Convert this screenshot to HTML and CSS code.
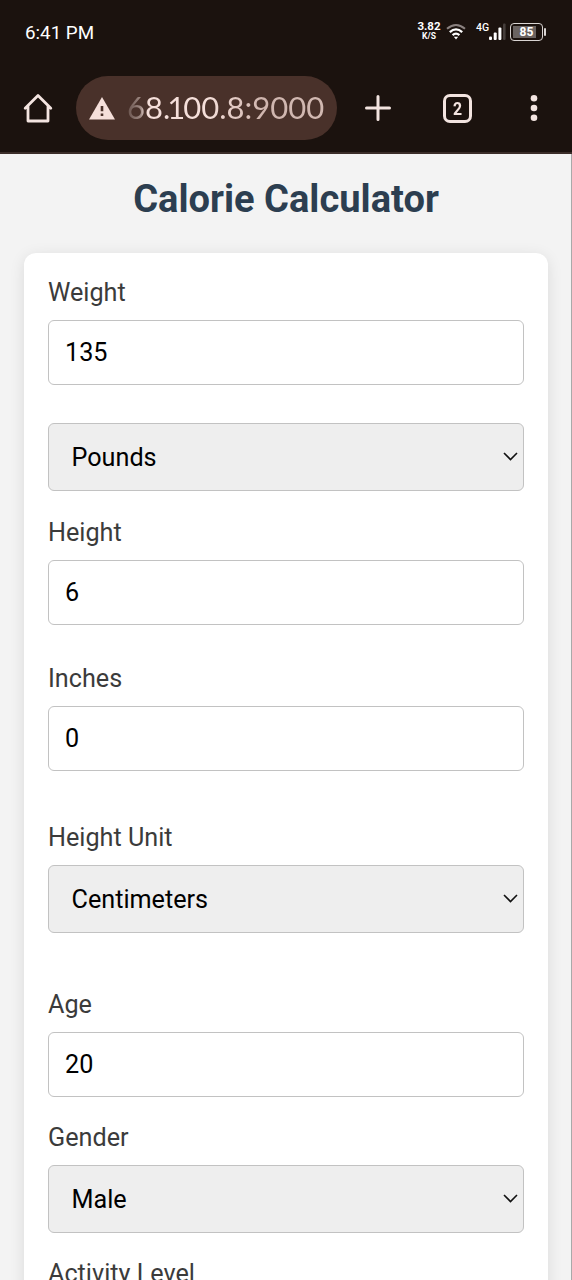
FILE: index.html
```html
<!DOCTYPE html>
<html lang="en">
<head>
<meta charset="utf-8">
<title>Calorie Calculator</title>
<link rel="stylesheet" href="styles.css">
</head>
<body>
<header class="chrome">
  <div class="status">
    <span class="clock">6:41 PM</span>
    <div class="indicators">
      <div class="speed"><span>3.82</span><span class="unit">K/S</span></div>
      <svg class="wifi" width="20" height="17" viewBox="0 0 20 17" fill="none" stroke="#fff" stroke-width="2">
        <path d="M1 5.8Q10-1.8 19 5.8" stroke="#8b8280"/>
        <path d="M3.8 9.2Q10 3.6 16.2 9.2" stroke-width="2.3"/>
        <path d="M6.6 12.2Q10 9 13.4 12.2" stroke-width="2.3"/>
        <path d="M7.8 13.8h4.4L10 16.6z" fill="#fff" stroke="none"/>
      </svg>
      <span class="network">4G</span>
      <svg class="signal" width="17" height="18" viewBox="0 0 17 18">
        <rect x="0" y="13.5" width="3" height="3.5" rx="1" fill="#fff"/>
        <rect x="4.7" y="9.5" width="3" height="7.5" rx="1" fill="#fff"/>
        <rect x="9.4" y="4.5" width="3" height="12.5" rx="1" fill="#fff"/>
        <rect x="14" y="0.5" width="2.6" height="16.5" rx="1" fill="#463e3b"/>
      </svg>
      <div class="battery"><span class="charge">85</span></div>
      <i class="battery-tip"></i>
    </div>
  </div>
  <div class="toolbar">
    <svg class="home" width="30" height="30" viewBox="0 0 30 30" fill="none" stroke="#f3e4e0" stroke-width="2.8" stroke-linejoin="round" stroke-linecap="round">
      <path d="M2.2 15.3 15 2.6l12.8 12.7M5 13V28h20V13"/>
    </svg>
    <div class="address">
      <svg width="26" height="23" viewBox="0 0 26 23">
        <path d="M13 0 26 22.5H0z" fill="#f5dfda"/>
        <path d="M11.7 9h2.6v5.2h-2.6zM11.7 16.4h2.6v2.5h-2.6z" fill="#49312a"/>
      </svg>
      <span class="url">68<span class="dot">.</span><span class="one">1</span>00.8:9000</span>
    </div>
    <svg class="plus" width="26" height="26" viewBox="0 0 26 26" stroke="#f3e4e0" stroke-width="3" stroke-linecap="round"><path d="M13 1.5v23M1.5 13h23"/></svg>
    <div class="tabs"><span class="count">2</span></div>
    <svg class="more" width="8" height="28" viewBox="0 0 8 28" fill="#f3e4e0"><circle cx="4" cy="4.3" r="3.3"/><circle cx="4" cy="14" r="3.3"/><circle cx="4" cy="23.7" r="3.3"/></svg>
  </div>
</header>
<main class="page">
  <h1 class="title">Calorie Calculator</h1>
  <form class="card">
    <label class="label weight" for="weight">Weight</label>
    <input class="field" id="weight" value="135">
    <div class="select after-input">Pounds<svg class="chevron" viewBox="0 0 15 9"><path d="M1 1l6.5 6.5L14 1"/></svg></div>
    <label class="label height" for="height">Height</label>
    <input class="field" id="height" value="6">
    <label class="label inches" for="inches">Inches</label>
    <input class="field" id="inches" value="0">
    <span class="label height-unit">Height Unit</span>
    <div class="select">Centimeters<svg class="chevron" viewBox="0 0 15 9"><path d="M1 1l6.5 6.5L14 1"/></svg></div>
    <label class="label age" for="age">Age</label>
    <input class="field" id="age" value="20">
    <span class="label">Gender</span>
    <div class="select">Male<svg class="chevron" viewBox="0 0 15 9"><path d="M1 1l6.5 6.5L14 1"/></svg></div>
    <span class="label">Activity Level</span>
  </form>
</main>
</body>
</html>
```

FILE: styles.css
```css
* { box-sizing: border-box; }

body {
  margin: 0;
  height: 1280px;
  overflow: hidden;
  display: flex;
  flex-direction: column;
  font-family: Roboto, sans-serif;
  background: #f3f3f3;
}

svg { display: block; flex: none; }

.chrome {
  flex: none;
  height: 154px;
  background: #1b120e;
  border-bottom: 2px solid #3b2d29;
  color: #fff;
}

.status {
  height: 64px;
  display: flex;
  align-items: center;
  justify-content: space-between;
  padding: 0 26px 0 25px;
}

.clock { font-size: 18.8px; line-height: 24px; padding-top: 1px; }

.indicators { display: flex; align-items: center; height: 24px; }

.speed {
  display: flex;
  flex-direction: column;
  align-items: center;
  width: 22px;
  font-size: 11.5px;
  line-height: 11px;
  font-weight: 700;
  padding-bottom: 2px;
}

.unit { font-size: 8.5px; line-height: 9px; }
.wifi { margin: 0 0 2px 6px; }

.network {
  margin-left: 10px;
  width: 13px;
  font-size: 10.5px;
  line-height: 12px;
  font-weight: 500;
  padding-bottom: 8px;
}

.battery {
  width: 33px;
  height: 18px;
  margin-left: 4px;
  border: 1.5px solid #d9d4d2;
  border-radius: 4px;
  padding: 2px;
  display: flex;
}

.charge {
  width: 100%;
  background: linear-gradient(90deg, #6a6361 86%, transparent 86%);
  font-size: 12px;
  line-height: 13px;
  font-weight: 700;
  text-align: center;
}

.battery-tip { width: 2px; height: 8px; margin-left: 1px; background: #d9d4d2; border-radius: 1px; }

.toolbar { display: flex; align-items: center; height: 88px; padding-left: 23px; }

.address {
  width: 261px;
  height: 64px;
  margin-left: 23px;
  border-radius: 32px;
  background: #49312a;
  display: flex;
  align-items: center;
  gap: 12px;
  padding-left: 13px;
}

.url {
  font-family: Lato, sans-serif;
  font-size: 31px;
  line-height: 40px;
  padding-bottom: 2px;
  white-space: nowrap;
  color: transparent;
  background: linear-gradient(90deg, #67514b 0, #a08b85 14px, #f5dfda 18px, #f5dfda 80px, #cfb5ae 135px, #d2b9b2 100%);
  background-clip: text;
}

.dot { letter-spacing: -3px; }
.one { letter-spacing: -2px; }

.plus { margin-left: 28px; }

.tabs {
  width: 29px;
  height: 29px;
  margin-left: 52px;
  border: 3px solid #f3e4e0;
  border-radius: 7px;
  color: #f3e4e0;
  font-size: 18px;
  line-height: 23px;
  font-weight: 700;
  text-align: center;
}

.count { display: block; transform: scaleX(0.88); }

.more { margin-left: 58px; }

.page { flex: 1; min-height: 0; overflow: hidden; border-right: 1px solid #a9a9a9; padding: 0 23px 0 24px; }

.title {
  margin: 0;
  height: 99px;
  padding-top: 21px;
  font-size: 38.1px;
  line-height: 48px;
  font-weight: 700;
  text-align: center;
  color: #2c3e50;
}

.card {
  display: flex;
  flex-direction: column;
  height: 1100px;
  padding: 0 24px;
  background: #fff;
  border-radius: 12px;
  box-shadow: 0 3px 15px rgba(0, 0, 0, 0.1);
}

.label {
  flex: none;
  margin: 25px 0 11px;
  font-size: 25.2px;
  line-height: 32px;
  color: #3b3b3b;
}

.field, .select {
  flex: none;
  width: 100%;
  border: 1px solid #c2c2c2;
  border-radius: 6px;
  font: 25.2px/30px Roboto, sans-serif;
  color: #000;
}

.field { height: 65px; padding: 0 17px 0 16px; background: #fff; }

.select {
  display: flex;
  align-items: center;
  justify-content: space-between;
  height: 68px;
  padding: 1px 5px 0 22.5px;
  background: #eee;
}

.weight { margin-top: 24px; }
.after-input { margin-top: 38px; }
.height { margin-top: 26px; }
.inches { margin-top: 38px; }
.height-unit { margin-top: 51px; }
.age { margin-top: 56px; }

.chevron { width: 15px; height: 9px; margin-bottom: 2px; fill: none; stroke: #111; stroke-width: 1.6; }
```
